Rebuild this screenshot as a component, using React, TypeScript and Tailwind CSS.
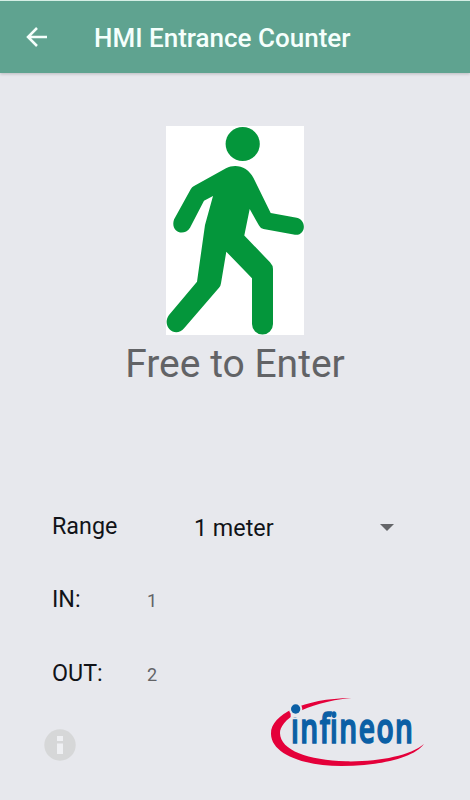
function WalkingFigure() {
  return (
    <svg viewBox="0 0 138 209" className="block h-[209px] w-[138px] bg-white" fill="#04963b" role="img" aria-label="Walking person">
      <circle cx="76.7" cy="18" r="17.1" />
      <path d="M60 42.3C70 37 82 41 87.5 52L104.7 87L130.7 91.8C141 94 140 110 129 108.8L97.5 103Q94.5 102.5 93 99.5L83.7 83L78.3 109.5L104 136.3Q107 139.5 107 143V198A10.5 10.5 0 0 1 86 198V152.3L60.3 125.7L55 157.3Q54.8 159.7 53 161.7L18.3 202C9 213 -5 200 3 189L31 155.7L39 99L47 70L38 74.7L24 101.7C18 111 4 106 8 93.5L24.7 63.3Q26 61 28 60Z" />
    </svg>
  );
}

function InfineonLogo() {
  return (
    <svg viewBox="0 0 525 255" className="block h-[85px] w-[175px]">
      <path d="M274 24C130 26 32 73 33 132C34 190 125 228 245 228C355 228 462 204 492 162C450 197 355 216 258 214C145 211 61 181 60 130C60 91 130 38 274 24Z" fill="#e4003a" />
      <g transform="translate(93 158) scale(0.67 1)">
        <text x="0" y="0" fontSize="126" fontWeight="600" textLength="546" lengthAdjust="spacing" fill="#0b5fa5" stroke="#0b5fa5" strokeWidth="5" className="font-['Open_Sans',sans-serif]">infineon</text>
      </g>
      <path d="M92 60H122V83H92Z" fill="#e7e8ed" />
      <circle cx="107" cy="57" r="20" fill="#e7e8ed" />
      <circle cx="107" cy="57" r="14" fill="#0b5fa5" />
    </svg>
  );
}

export default function App() {
  return (
    <div className="flex h-[800px] w-[470px] flex-col overflow-hidden bg-[#e7e8ed] font-[Roboto,sans-serif] text-[#111318]">
      <header className="flex h-[73px] shrink-0 items-center border-t border-[#d5eee5] bg-[#5fa390] pl-[26px] shadow-[0_1px_3px_rgba(0,0,0,0.2)]">
        <svg viewBox="0 0 21 20" className="h-5 w-[21px]" fill="none" stroke="#f5fffc" strokeWidth="2.5">
          <path d="M21 10H2M11 1L2 10L11 19" />
        </svg>
        <h1 className="ml-[47px] mt-0.5 whitespace-nowrap text-[26px] font-medium leading-8 text-[#f5fffc]">HMI Entrance Counter</h1>
      </header>
      <main className="flex flex-1 flex-col pt-[53px]">
        <div className="flex flex-col items-center">
          <WalkingFigure />
          <p className="mt-[5px] whitespace-nowrap text-[39px] leading-[48px] text-[#626366]">Free to Enter</p>
        </div>
        <div className="mt-[122px] flex h-[36px] items-center pl-[52px] text-[23.3px]">
          <span className="w-[142px] pb-1">Range</span>
          <button className="flex w-[200px] items-center justify-between">
            <span>1 meter</span>
            <svg viewBox="0 0 14 7" className="mb-px h-[7px] w-[14px]" fill="#646569"><path d="M0 0H14L7 7Z" /></svg>
          </button>
        </div>
        <div className="mt-[36px] flex h-[36px] items-center pl-[52px]">
          <span className="w-[95px] pb-px text-[23.3px]">IN:</span>
          <span className="text-[18px] text-[#626366]">1</span>
        </div>
        <div className="mt-[38px] flex h-[36px] items-center pl-[52px]">
          <span className="w-[95px] pb-px text-[23.3px]">OUT:</span>
          <span className="text-[18px] text-[#626366]">2</span>
        </div>
        <div className="-mt-[2px] flex pl-[44px]">
          <svg viewBox="0 0 32 32" className="mt-[39px] h-8 w-8 shrink-0">
            <circle cx="16" cy="16" r="15.7" fill="#d6d7d8" />
            <path d="M13 7H19V12H13ZM13 14.5H19V25H13Z" fill="#eff0f3" />
          </svg>
          <div className="ml-[184px]"><InfineonLogo /></div>
        </div>
      </main>
    </div>
  );
}
